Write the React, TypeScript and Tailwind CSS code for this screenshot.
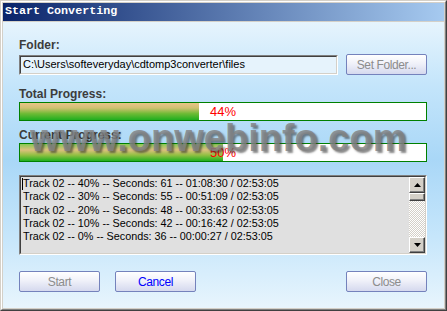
import React from "react";

const lines = [
  "Track 02 -- 40% -- Seconds: 61 -- 01:08:30 / 02:53:05",
  "Track 02 -- 30% -- Seconds: 55 -- 00:51:09 / 02:53:05",
  "Track 02 -- 20% -- Seconds: 48 -- 00:33:63 / 02:53:05",
  "Track 02 -- 10% -- Seconds: 42 -- 00:16:42 / 02:53:05",
  "Track 02 -- 0% -- Seconds: 36 -- 00:00:27 / 02:53:05",
];

function Bar({ pct, alt }: { pct: number; alt?: boolean }) {
  return (
    <div className="relative h-[19px] border border-[#008000] bg-white flex">
      <div
        className={
          alt
            ? "h-full bg-[linear-gradient(to_bottom,#86c955_0%,#dcc07e_35%,#93c043_65%,#1fae1f_100%)]"
            : "h-full bg-[linear-gradient(to_bottom,#eac489_0%,#cfc070_30%,#6fbb36_62%,#1fae1f_100%)]"
        }
        style={{ width: `${pct}%` }}
      />
      <div className="absolute inset-0 flex items-center justify-center text-[13px] leading-none text-[#ff0000]">
        {pct}%
      </div>
    </div>
  );
}

function Btn({ label, blue, w }: { label: string; blue?: boolean; w: string }) {
  return (
    <div
      className={`${w} h-[21px] border border-[#7482bc] rounded-[2px] bg-[linear-gradient(to_bottom,#ffffff_0%,#f0f1f9_45%,#d5d9ee_100%)] flex items-center justify-center text-[12px] tracking-[-0.4px] ${
        blue ? "text-[#0000ff]" : "text-[#8c8c8c]"
      }`}
    >
      {label}
    </div>
  );
}

function Arrow({ up }: { up?: boolean }) {
  return (
    <div className="w-[16px] h-[16px] bg-[#d4d0c8] border border-t-white border-l-white border-r-[#404040] border-b-[#404040] shadow-[inset_-1px_-1px_#808080] flex items-center justify-center">
      <svg width="7" height="4" viewBox="0 0 7 4">
        {up ? <path d="M3.5 0 L7 4 L0 4 Z" fill="#000" /> : <path d="M0 0 L7 0 L3.5 4 Z" fill="#000" />}
      </svg>
    </div>
  );
}

export default function App() {
  return (
    <div className="w-[447px] h-[311px] border border-t-[#d4d0c8] border-l-[#d4d0c8] border-r-[#404040] border-b-[#404040] bg-[#d4d0c8] font-['Liberation_Sans',Arial,sans-serif]">
      <div className="h-full border border-t-white border-l-white border-r-[#808080] border-b-[#808080] p-px flex flex-col">
        <div className="h-[18px] bg-[linear-gradient(to_right,#0a246a,#a6caf0)] flex items-center pl-[2px]">
          <span className="font-['Liberation_Mono',monospace] font-bold text-[11.7px] text-white leading-none">
            Start Converting
          </span>
        </div>
        <div className="relative mt-px flex-1 bg-[linear-gradient(to_bottom,#e6f4fd_0%,#c4e5fb_22%,#a9d7f7_48%,#c6e6fb_75%,#e8f5fd_100%)] pl-[16px] pr-[17px] pt-[16px] flex flex-col">
          <div className="h-[15px] leading-[15px] text-[12px] font-bold text-[#3c3c3c]">Folder:</div>
          <div className="mt-px flex items-center gap-[8px]">
            <div className="flex-1 h-[20px] border border-t-[#808080] border-l-[#808080] border-r-white border-b-white">
              <div className="h-full border border-t-[#404040] border-l-[#404040] border-r-[#d4d0c8] border-b-[#d4d0c8] bg-[#e6f3fc] flex items-center pl-[2px] text-[11px] text-black whitespace-nowrap overflow-hidden">
                C:\Users\softeveryday\cdtomp3converter\files
              </div>
            </div>
            <Btn label="Set Folder..." w="w-[81px] h-[20px]" />
          </div>

          <div className="mt-[12px] h-[15px] leading-[15px] text-[12px] font-bold text-[#3c3c3c]">Total Progress:</div>
          <Bar pct={44} />

          <div className="mt-[7px] h-[15px] leading-[15px] text-[12px] font-bold text-[#3c3c3c]">Current Progress:</div>
          <Bar pct={50} alt />

          <div className="mt-[13px] h-[80px] border border-t-[#808080] border-l-[#808080] border-r-white border-b-white">
            <div className="h-full border border-t-[#404040] border-l-[#404040] border-r-[#d4d0c8] border-b-[#d4d0c8] bg-[#e0e0e0] flex">
              <div className="relative flex-1 pl-[2px] text-[10.8px] leading-[13.3px] text-black whitespace-nowrap overflow-hidden">
                <div className="absolute left-[1px] top-[1px] w-px h-[12px] bg-black" />
                {lines.map((l) => (
                  <div key={l}>{l}</div>
                ))}
              </div>
              <div className="w-[16px] flex flex-col">
                <Arrow up />
                <div className="w-[16px] h-[8px] bg-[#d4d0c8] border border-t-white border-l-white border-r-[#404040] border-b-[#404040] shadow-[inset_-1px_-1px_#808080]" />
                <div className="flex-1 bg-[repeating-conic-gradient(#d4d0c8_0_25%,#ffffff_0_50%)] bg-[length:2px_2px]" />
                <Arrow />
              </div>
            </div>
          </div>

          <div className="mt-[16px] flex items-center">
            <Btn label="Start" w="w-[81px]" />
            <div className="ml-[15px]">
              <Btn label="Cancel" blue w="w-[81px]" />
            </div>
            <div className="ml-auto">
              <Btn label="Close" w="w-[81px]" />
            </div>
          </div>

          <div className="absolute left-[27px] top-[97px] text-[38px] leading-[38px] font-bold whitespace-nowrap text-[rgba(130,130,130,0.82)] [text-shadow:2px_2px_2px_rgba(40,40,40,0.55)] pointer-events-none">
            www.onwebinfo.com
          </div>
        </div>
      </div>
    </div>
  );
}
